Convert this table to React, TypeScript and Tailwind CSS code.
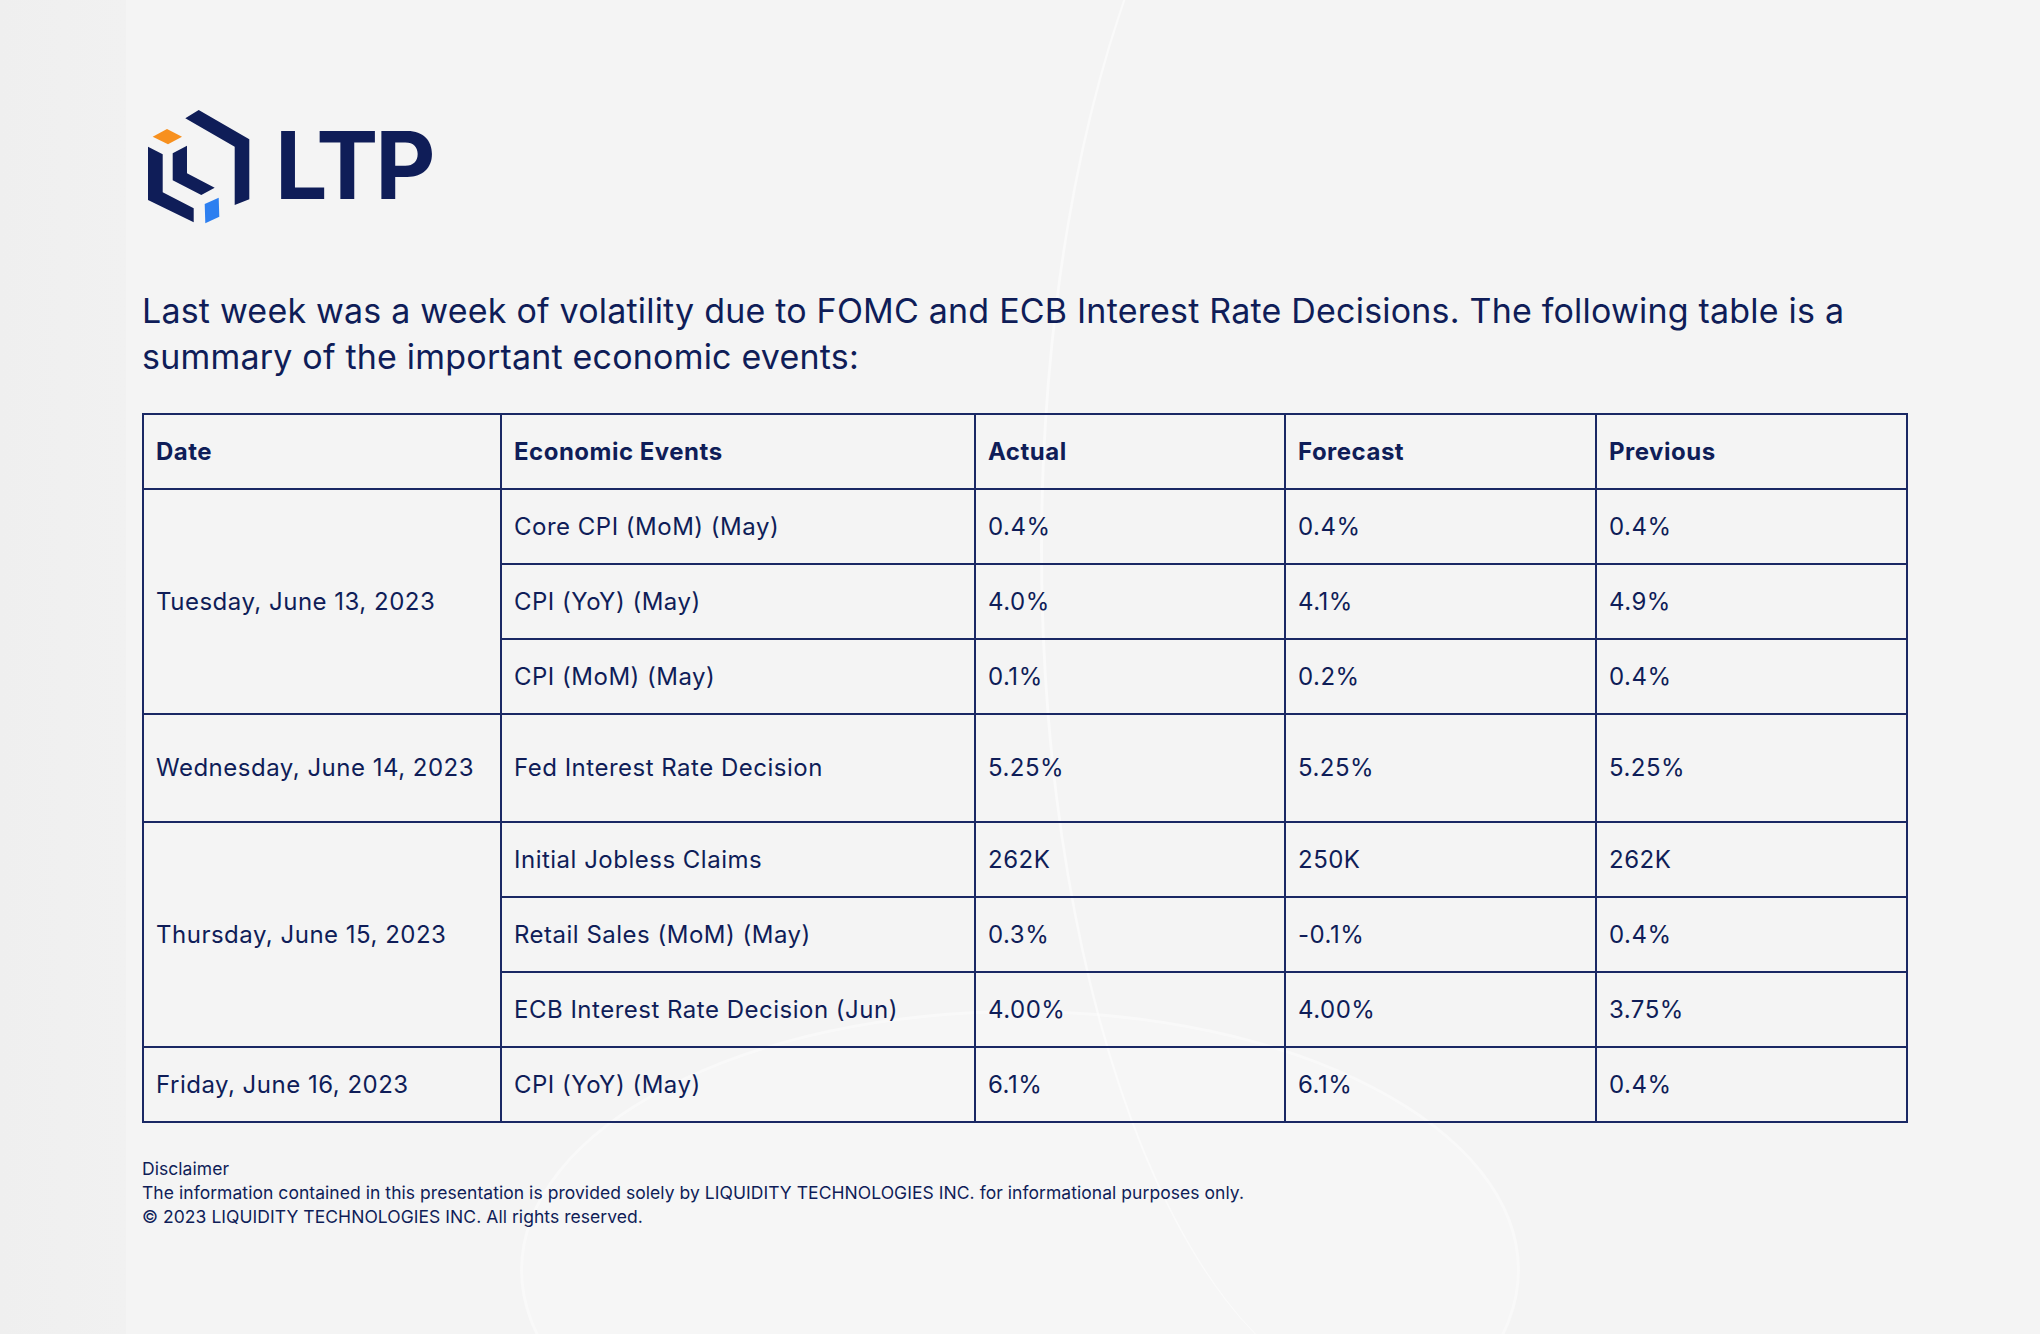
import React from "react";

type Row = {
  date?: string;
  span?: number;
  event: string;
  actual: string;
  forecast: string;
  previous: string;
  tall?: boolean;
};

const rows: Row[] = [
  { date: "Tuesday, June 13, 2023", span: 3, event: "Core CPI (MoM) (May)", actual: "0.4%", forecast: "0.4%", previous: "0.4%" },
  { event: "CPI (YoY) (May)", actual: "4.0%", forecast: "4.1%", previous: "4.9%" },
  { event: "CPI (MoM) (May)", actual: "0.1%", forecast: "0.2%", previous: "0.4%" },
  { date: "Wednesday, June 14, 2023", span: 1, event: "Fed Interest Rate Decision", actual: "5.25%", forecast: "5.25%", previous: "5.25%", tall: true },
  { date: "Thursday, June 15, 2023", span: 3, event: "Initial Jobless Claims", actual: "262K", forecast: "250K", previous: "262K" },
  { event: "Retail Sales (MoM) (May)", actual: "0.3%", forecast: "-0.1%", previous: "0.4%" },
  { event: "ECB Interest Rate Decision (Jun)", actual: "4.00%", forecast: "4.00%", previous: "3.75%" },
  { date: "Friday, June 16, 2023", span: 1, event: "CPI (YoY) (May)", actual: "6.1%", forecast: "6.1%", previous: "0.4%" },
];

// logo mark, coordinates traced off the original artwork
function LogoMark() {
  return (
    <svg width="115" height="125" viewBox="0 0 115 125" className="shrink-0">
      <polygon points="43.3,13.3 56.7,5 107.3,34.3 107.3,94.3 92.7,100 92.7,41.7" fill="#0f1d58" />
      <polygon points="6,41.7 20.7,49.3 20.7,87.3 51.7,103.3 51.7,117.3 6,95" fill="#0f1d58" />
      <polygon points="30.7,48.3 45,40.7 45,68.3 72.7,82.7 59.3,90 30.7,75.3" fill="#0f1d58" />
      <polygon points="10.7,31.7 25,24 40,31.7 26,39.3" fill="#f7901e" />
      <polygon points="62.7,99 76.7,92.7 77.3,111.7 63.3,118.3" fill="#2d7ff0" />
    </svg>
  );
}

const cell = "border-2 border-[#1a2864] px-[12px] text-left align-middle";

export default function App() {
  return (
    <div className="relative w-full h-[1334px] overflow-hidden bg-[#f4f4f4] text-[#0f1d58] font-['Inter','Liberation_Sans',sans-serif]">
      {/* soft background shapes */}
      <div className="absolute left-0 top-0 h-full w-[126px] bg-gradient-to-r from-[#efefef] to-[#f1f1f1]" />
      <div className="absolute left-[520px] top-[1010px] w-[1000px] h-[520px] rounded-[50%] border-[3px] border-white/40 bg-[#f6f6f6]" />
      <div className="absolute left-[1040px] top-[-300px] w-[700px] h-[1700px] rounded-[50%] border-l-[3px] border-white/50" />

      <div className="relative flex flex-col pl-[142px] pr-[134px]">
        <div className="mt-[105px] flex items-center gap-[18px]">
          <LogoMark />
          <span className="text-[93px] font-bold leading-none tracking-[-3px] text-[#0f1d58] -mt-[4px]">
            LTP
          </span>
        </div>

        <p className="mt-[58px] text-[34px] leading-[46px] tracking-[0.2px] text-[#0f1d58]">
          Last week was a week of volatility due to FOMC and ECB Interest Rate Decisions. The following table is a
          <br />
          summary of the important economic events:
        </p>

        <table className="mt-[33px] w-[1764px] table-fixed border-collapse text-[24px] tracking-[0.5px]">
          <colgroup>
            <col className="w-[358px]" />
            <col className="w-[474px]" />
            <col className="w-[310px]" />
            <col className="w-[311px]" />
            <col className="w-[311px]" />
          </colgroup>
          <thead>
            <tr className="h-[75px] font-extrabold">
              <th className={cell}>Date</th>
              <th className={cell}>Economic Events</th>
              <th className={cell}>Actual</th>
              <th className={cell}>Forecast</th>
              <th className={cell}>Previous</th>
            </tr>
          </thead>
          <tbody>
            {rows.map((r) => (
              <tr key={r.event + r.actual} className={r.tall ? "h-[108px]" : "h-[75px]"}>
                {r.date && (
                  <td rowSpan={r.span} className={cell}>
                    {r.date}
                  </td>
                )}
                <td className={cell}>{r.event}</td>
                <td className={cell}>{r.actual}</td>
                <td className={cell}>{r.forecast}</td>
                <td className={cell}>{r.previous}</td>
              </tr>
            ))}
          </tbody>
        </table>

        <div className="mt-[34px] text-[17.5px] leading-[24px] tracking-[0.05px] text-[#0f1d58]">
          <p>Disclaimer</p>
          <p>The information contained in this presentation is provided solely by LIQUIDITY TECHNOLOGIES INC. for informational purposes only.</p>
          <p>© 2023 LIQUIDITY TECHNOLOGIES INC. All rights reserved.</p>
        </div>
      </div>
    </div>
  );
}
